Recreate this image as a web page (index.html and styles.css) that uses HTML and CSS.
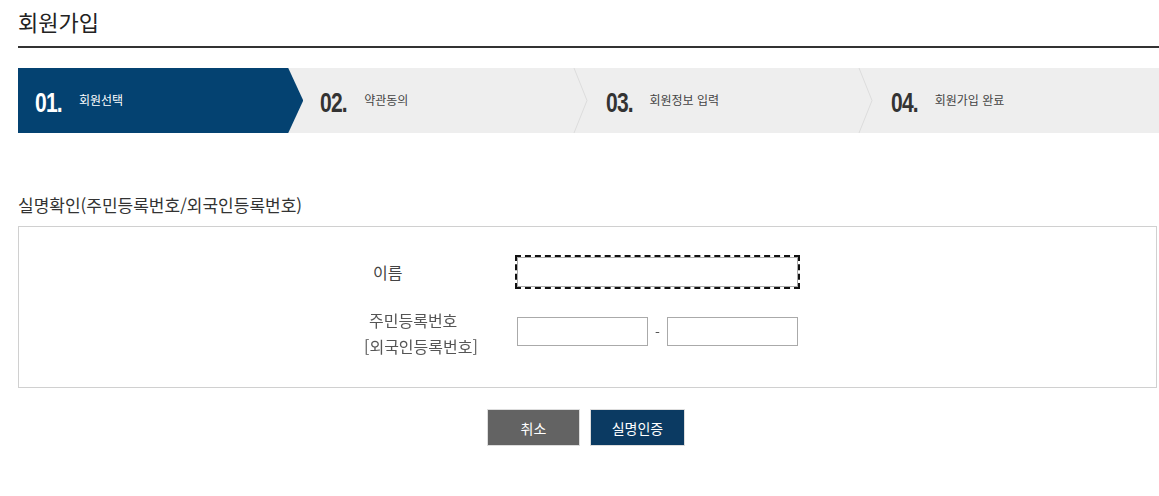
FILE: index.html
```html
<!DOCTYPE html>
<html lang="ko">
<head>
  <meta charset="UTF-8">
  <title>회원가입</title>
  <link rel="stylesheet" href="styles.css">
</head>
<body>

  <div class="wrap">
    <h1 class="page-title">회원가입</h1>

    <ol class="steps">
      <li class="step active">
        <span class="num">01.</span><span class="txt">회원선택</span>
      </li>
      <li class="step">
        <span class="num">02.</span><span class="txt">약관동의</span>
        <svg class="divider" width="16" height="65" viewBox="0 0 16 65"><polyline points="1,0 14,32.5 1,65" fill="none" stroke="#dcdcdc" stroke-width="1"/></svg>
      </li>
      <li class="step">
        <span class="num">03.</span><span class="txt">회원정보 입력</span>
        <svg class="divider" width="16" height="65" viewBox="0 0 16 65"><polyline points="1,0 14,32.5 1,65" fill="none" stroke="#dcdcdc" stroke-width="1"/></svg>
      </li>
      <li class="step">
        <span class="num">04.</span><span class="txt">회원가입 완료</span>
      </li>
    </ol>

    <h2 class="sec-title">실명확인(주민등록번호/외국인등록번호)</h2>

    <form class="box" id="nameForm">
      <div class="row row-name">
        <label class="lbl lbl-name" for="userName">이름</label>
        <input type="text" id="userName" class="inp inp-long" autofocus>
      </div>
      <div class="row row-jumin">
        <label class="lbl lbl-jumin" for="jumin1"><span class="l1">주민등록번호</span><span class="l2">[외국인등록번호]</span></label>
        <div class="jumin">
          <input type="text" id="jumin1" class="inp inp-short">
          <span class="dash">-</span>
          <input type="password" id="jumin2" class="inp inp-short">
        </div>
      </div>
    </form>

    <div class="btns">
      <button type="button" class="btn btn-gray">취소</button>
      <button type="submit" form="nameForm" class="btn btn-navy">실명인증</button>
    </div>
  </div>

</body>
</html>
```

FILE: styles.css
```css
body {
  margin: 0;
  font-family: "Noto Sans CJK KR", "Noto Sans", sans-serif;
  color: #333;
  background: #fff;
}

.wrap {
  padding-left: 18px;
}

.page-title {
  margin: 0;
  padding: 6px 0 9px;
  font-size: 22px;
  font-weight: normal;
  line-height: 31px;
  color: #222;
  border-bottom: 2px solid #333;
}

.steps {
  display: flex;
  list-style: none;
  margin: 20px 0 0;
  padding: 0;
  height: 65px;
  background: #eeeeee;
}

.step {
  position: relative;
  flex: 1 1 0;
  display: flex;
  align-items: center;
  padding-left: 17px;
}

.step.active {
  background: #044271;
  clip-path: polygon(0 0, calc(100% - 15px) 0, 100% 50%, calc(100% - 15px) 100%, 0 100%);
}

.step .divider {
  position: absolute;
  top: 0;
  right: 0;
}

.num {
  display: inline-block;
  font-family: "Liberation Sans", sans-serif;
  font-weight: bold;
  font-size: 27px;
  letter-spacing: -1px;
  color: #333;
  margin-top: 5px;
  width: 44px;
  transform: scaleX(0.78);
  transform-origin: left center;
}

.txt {
  font-size: 12px;
  color: #444;
  margin-bottom: 2px;
}

.active .num,
.active .txt {
  color: #fff;
}

.sec-title {
  margin: 60px 0 0;
  font-size: 17px;
  font-weight: normal;
  line-height: 24px;
  color: #333;
}

.box {
  margin: 9px 2px 0 0;
  height: 162px;
  border: 1px solid #d0d0d0;
  padding-top: 30px;
  box-sizing: border-box;
}

.row {
  display: flex;
  margin-left: 345px;
}

.row-name {
  align-items: center;
}

.row-jumin {
  align-items: flex-start;
  margin-top: 20px;
}

.lbl {
  width: 153px;
  font-size: 16px;
  color: #555;
}

.lbl-name {
  padding-left: 9px;
  box-sizing: border-box;
  color: #444;
}

.lbl-jumin {
  display: flex;
  flex-direction: column;
  line-height: 26px;
}

.lbl-jumin .l1 {
  padding-left: 5px;
}

.inp {
  box-sizing: border-box;
  border: 1px solid #aaa;
  font-size: 14px;
  padding: 0 6px;
  margin: 0;
}

.inp-long {
  width: 281px;
  height: 30px;
}

.inp:focus {
  outline: 2px dashed #111;
  outline-offset: 0;
}

.inp-short {
  width: 131px;
  height: 29px;
}

.jumin {
  display: flex;
  align-items: center;
  margin-top: 10px;
}

.dash {
  width: 19px;
  text-align: center;
  font-size: 14px;
  color: #555;
}

.btns {
  display: flex;
  justify-content: center;
  gap: 10px;
  margin-top: 21px;
  padding-right: 5px;
}

.btn {
  height: 37px;
  border: 1px solid #ddd;
  color: #fff;
  font-family: inherit;
  font-size: 14px;
  cursor: pointer;
}

.btn-gray {
  width: 93px;
  background: #636363;
}

.btn-navy {
  width: 95px;
  background: #0b3a62;
}
```
